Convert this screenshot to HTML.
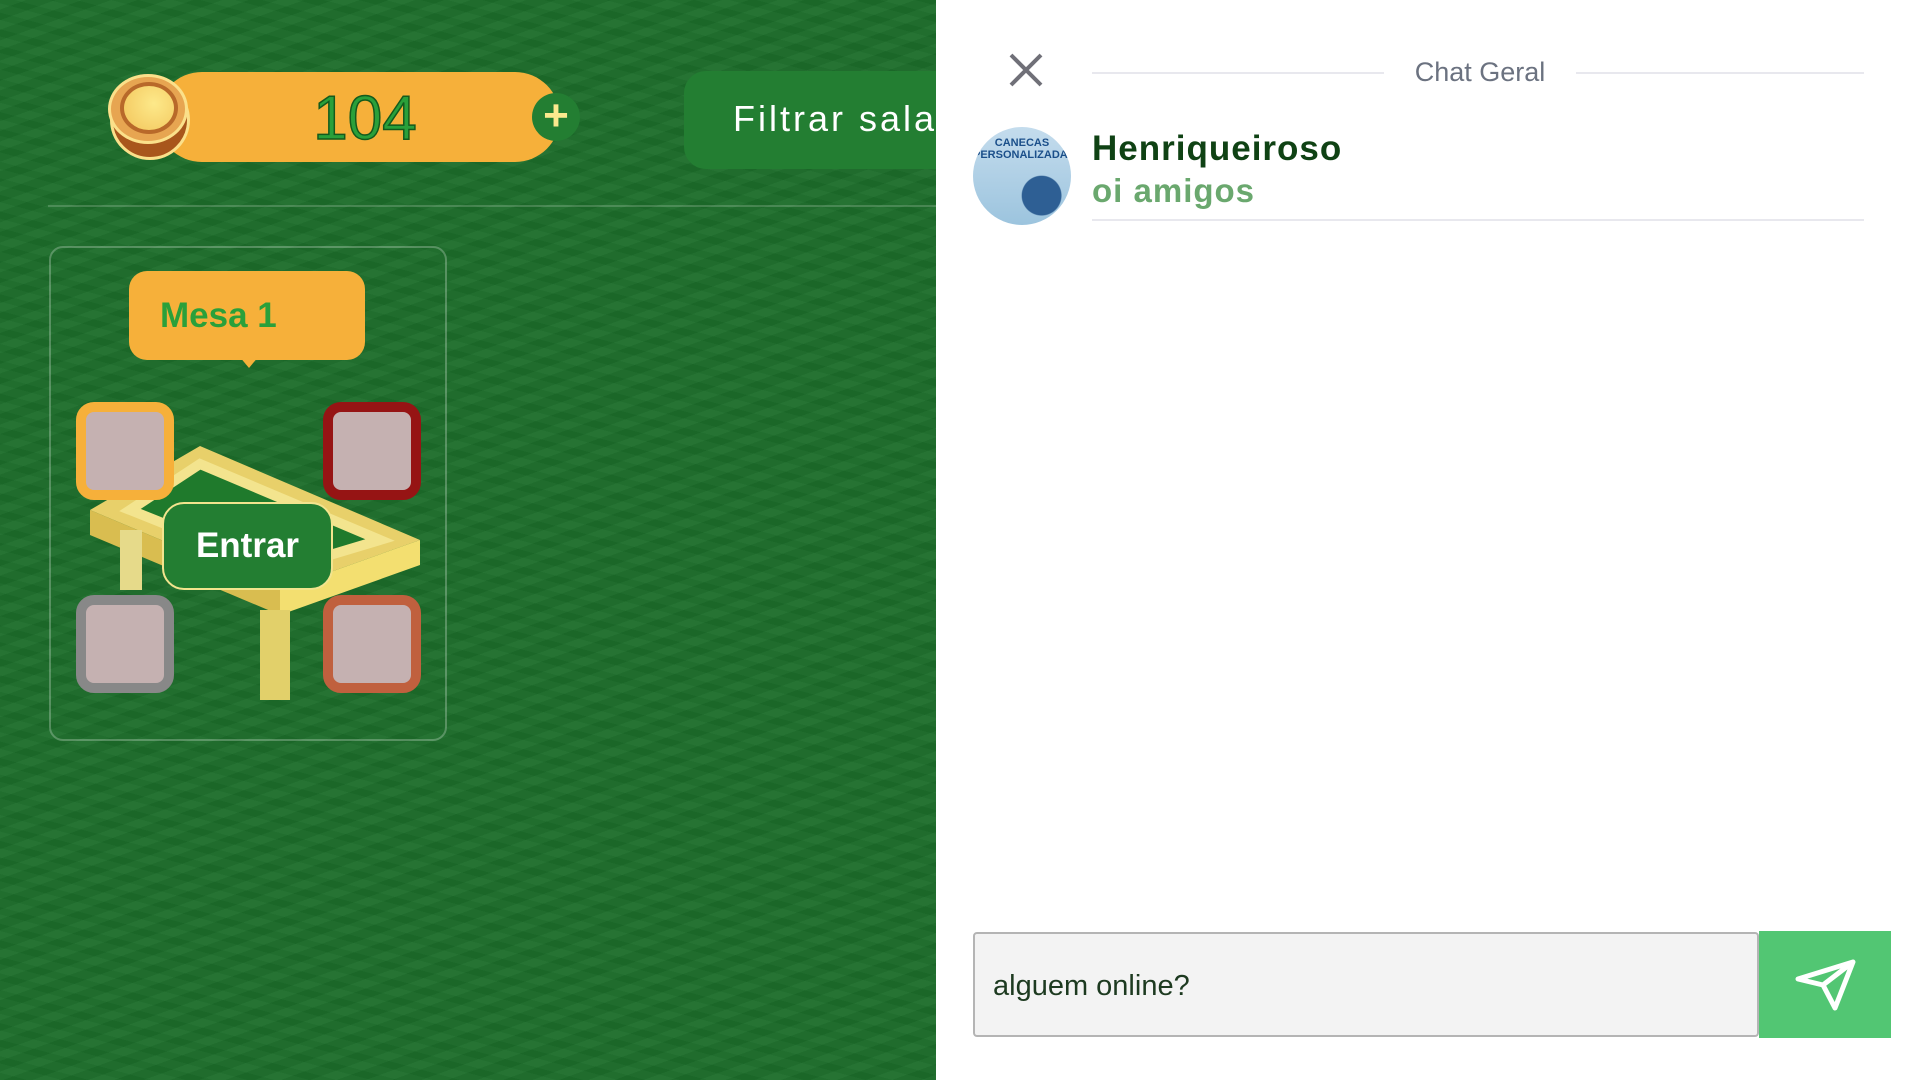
<!DOCTYPE html>
<html><head><meta charset="utf-8"><style>
*{margin:0;padding:0;box-sizing:border-box}
body{width:1920px;height:1080px;overflow:hidden;position:relative;font-family:"Liberation Sans",sans-serif;background:#fff}
.grass{position:absolute;left:0;top:0;width:936px;height:1080px;overflow:hidden;background:
repeating-linear-gradient(160deg,rgba(255,255,255,0.025) 0 9px,rgba(0,0,0,0.03) 9px 19px),
repeating-linear-gradient(15deg,rgba(0,0,0,0.035) 0 7px,rgba(255,255,255,0.015) 7px 16px),
#1d6e2b;}
.abs{position:absolute}
</style></head><body>
<div class="grass">
<!-- coin bar -->
<div class="abs" style="left:157px;top:72px;width:403px;height:90px;background:#f6b03a;border-radius:45px"></div>
<div class="abs" style="left:110px;top:80px;width:80px;height:80px;border-radius:50%;background:#a8561c;border:3px solid #fbe08a"></div>
<div class="abs" style="left:108px;top:74px;width:80px;height:70px;border-radius:50%;background:#e7a551;border:3px solid #fbe08a"></div>
<div class="abs" style="left:120px;top:82px;width:58px;height:52px;border-radius:50%;background:radial-gradient(circle at 60% 40%,#fde98a,#f2c45a);border:4px solid #b8692a"></div>
<div class="abs" style="left:300px;top:84px;width:130px;text-align:center;font-size:62px;line-height:70px;color:#2aa03a;-webkit-text-stroke:1.5px #145a1c">104</div>
<div class="abs" style="left:532px;top:93px;width:48px;height:48px;border-radius:50%;background:#237e32;color:#fbe98e;font-size:44px;font-weight:bold;line-height:46px;text-align:center">+</div>
<!-- filter -->
<div class="abs" style="left:684px;top:71px;width:300px;height:98px;background:#237e32;border-radius:22px"></div>
<div class="abs" style="left:733px;top:98px;font-size:36px;color:#fff;letter-spacing:3px;white-space:nowrap">Filtrar sala</div>
<div class="abs" style="left:48px;top:205px;width:890px;height:2px;background:rgba(255,255,255,0.18)"></div>
<!-- card -->
<div class="abs" style="left:49px;top:246px;width:398px;height:495px;border:2px solid rgba(255,255,255,0.25);border-radius:14px"></div>
<div class="abs" style="left:129px;top:271px;width:236px;height:89px;background:#f6b03a;border-radius:18px"></div>
<div class="abs" style="left:239px;top:356px;width:0;height:0;border-left:10px solid transparent;border-right:10px solid transparent;border-top:12px solid #f6b03a"></div>
<div class="abs" style="left:160px;top:296px;font-size:35px;font-weight:bold;color:#2aa03a">Mesa 1</div>
<!-- table -->
<svg class="abs" style="left:90px;top:430px" width="340" height="280">
<polygon points="110,16 330,110 190,160 0,80" fill="#e8d06a"/>
<polygon points="110,34 290,110 190,140 40,80" fill="#1f7a2c" stroke="#f3e48e" stroke-width="10"/>
<polygon points="0,80 190,160 190,185 0,105" fill="#d9bd50"/>
<polygon points="190,160 330,110 330,135 190,185" fill="#f3df70"/>
<rect x="170" y="180" width="30" height="90" fill="#e2d06a"/>
<rect x="30" y="100" width="22" height="60" fill="#e6da8a"/>
</svg>
<div class="abs" style="left:76px;top:402px;width:98px;height:98px;border:10px solid #f6b03a;border-radius:18px;background:#c5b1b1"></div>
<div class="abs" style="left:323px;top:402px;width:98px;height:98px;border:10px solid #961414;border-radius:18px;background:#c5b1b1"></div>
<div class="abs" style="left:76px;top:595px;width:98px;height:98px;border:10px solid #888;border-radius:18px;background:#c5b1b1"></div>
<div class="abs" style="left:323px;top:595px;width:98px;height:98px;border:10px solid #c0603e;border-radius:18px;background:#c5b1b1"></div>
<div class="abs" style="left:162px;top:502px;width:171px;height:88px;background:#237e32;border:2px solid #f3e48e;border-radius:22px;color:#fff;font-size:35px;font-weight:bold;text-align:center;line-height:84px">Entrar</div>
</div>
<!-- chat panel -->
<svg class="abs" style="left:1008px;top:52px" width="36" height="36"><path d="M3 3L33 33M33 3L3 33" stroke="#707078" stroke-width="4"/></svg>
<div class="abs" style="left:1092px;top:72px;width:292px;height:2px;background:#e8e8ee"></div>
<div class="abs" style="left:1576px;top:72px;width:288px;height:2px;background:#e8e8ee"></div>
<div class="abs" style="left:1384px;top:57px;width:192px;text-align:center;font-size:27px;color:#6b7280">Chat Geral</div>
<div class="abs" style="left:973px;top:127px;width:98px;height:98px;border-radius:50%;background:radial-gradient(circle at 70% 70%,#2e5f94 0 20%,transparent 21%),linear-gradient(#c4dced,#9cc4de);overflow:hidden;color:#1b4f8a;font-size:11px;font-weight:bold;text-align:center;padding-top:10px">CANECAS<br>PERSONALIZADAS</div>
<div class="abs" style="left:1092px;top:129px;font-size:35px;font-weight:bold;color:#0f4214;letter-spacing:1px">Henriqueiroso</div>
<div class="abs" style="left:1092px;top:172px;font-size:33px;font-weight:bold;color:#6aa86e;letter-spacing:1px">oi amigos</div>
<div class="abs" style="left:1092px;top:219px;width:772px;height:2px;background:#e8e8ee"></div>
<div class="abs" style="left:973px;top:932px;width:786px;height:105px;background:#f3f3f3;border:2px solid #b4b4b4;border-radius:4px"></div>
<div class="abs" style="left:993px;top:970px;font-size:29px;color:#1d3a20">alguem online?</div>
<div class="abs" style="left:1759px;top:931px;width:132px;height:107px;background:#52c673"></div>
<svg class="abs" style="left:1790px;top:955px" width="70" height="60"><path d="M8 24L63 7L45 53L33 30Z M33 30L63 7" fill="none" stroke="#fff" stroke-width="5" stroke-linejoin="round" stroke-linecap="round"/></svg>
</body></html>
